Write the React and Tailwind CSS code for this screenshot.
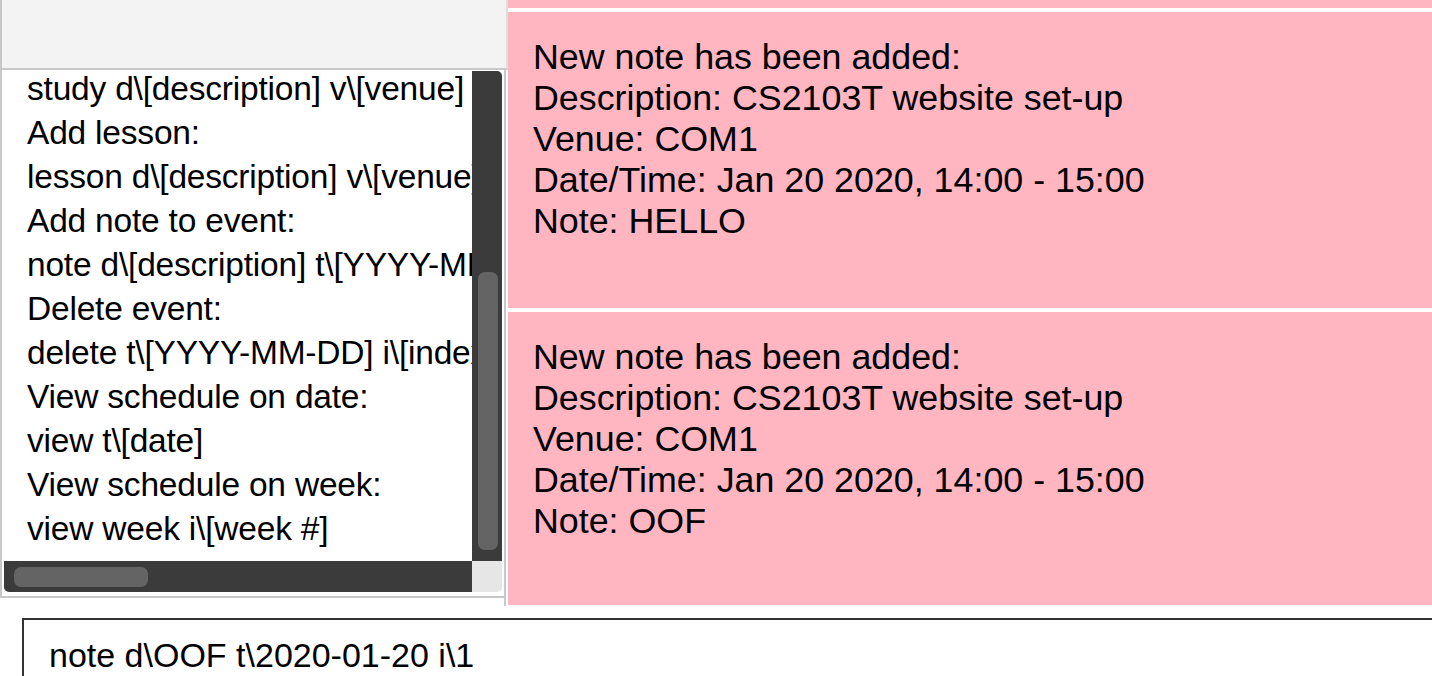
import React from "react";

const leftLines = [
  "study d\\[description] v\\[venue] t\\[YYYY-MM-DD HHMM-HHMM]",
  "Add lesson:",
  "lesson d\\[description] v\\[venue] t\\[YYYY-MM-DD HHMM-HHMM]",
  "Add note to event:",
  "note d\\[description] t\\[YYYY-MM-DD] i\\[index]",
  "Delete event:",
  "delete t\\[YYYY-MM-DD] i\\[index]",
  "View schedule on date:",
  "view t\\[date]",
  "View schedule on week:",
  "view week i\\[week #]",
];

function Card({ note }) {
  return (
    <div className="h-[296px] shrink-0 bg-[#ffb6c1] pl-[25px] pt-[25px] text-[35.8px] leading-[41px] text-black font-['Liberation_Sans',Arial,sans-serif]">
      <div>New note has been added:</div>
      <div>Description: CS2103T website set-up</div>
      <div>Venue: COM1</div>
      <div>Date/Time: Jan 20 2020, 14:00 - 15:00</div>
      <div>Note: {note}</div>
    </div>
  );
}

export default function App() {
  return (
    <div className="w-[1432px] h-[676px] overflow-hidden bg-white flex flex-col font-['Liberation_Sans',Arial,sans-serif]">
      <div className="flex h-[606px] shrink-0">
        {/* Left column */}
        <div className="w-[508px] shrink-0 flex flex-col">
          <div className="h-[70px] w-[508px] bg-[#f3f3f3] border-l-2 border-b-2 border-r-2 border-l-[#c8c8c8] border-b-[#c8c8c8] border-r-[#dedede]" />
          <div className="w-[506px] h-[528px] border-l-2 border-r-2 border-b-2 border-[#c8c8c8] bg-white pt-[1px] pl-[2px] pr-[2px] pb-[4px]">
            <div className="grid h-full w-full grid-cols-[1fr_30px] grid-rows-[1fr_31px]">
              <div className="overflow-hidden">
                <div className="-mt-[4px] pl-[23px] text-[33.5px] tracking-[-0.2px] leading-[44px] text-black">
                  {leftLines.map((l, i) => (
                    <div key={i} className="whitespace-nowrap">
                      {l}
                    </div>
                  ))}
                </div>
              </div>
              <div className="bg-[#3b3b3b] rounded-tr-[5px] pt-[201px] pb-[11px] pl-[6px] pr-[4px] flex">
                <div className="flex-1 bg-[#646464] rounded-[7px]" />
              </div>
              <div className="bg-[#3b3b3b] rounded-bl-[5px] pl-[10px] pt-[6px] pb-[5px] flex">
                <div className="w-[134px] bg-[#646464] rounded-[7px]" />
              </div>
              <div className="bg-[#e6e6e6] rounded-br-[5px]" />
            </div>
          </div>
          <div className="h-[8px] w-[506px] border-r-2 border-[#c8c8c8]" />
        </div>
        {/* Right column */}
        <div className="flex-1 h-[605px] overflow-hidden bg-white flex flex-col gap-[4px]">
          <div className="h-[8px] shrink-0 bg-[#ffb6c1]" />
          <Card note="HELLO" />
          <Card note="OOF" />
        </div>
      </div>
      <div className="mt-[12px] ml-[22px] flex-1 border-t-2 border-l-2 border-[#333333] pl-[25px] pt-[15px]">
        <div className="text-[34px] leading-[40px] text-black whitespace-nowrap">
          note d\OOF t\2020-01-20 i\1
        </div>
      </div>
    </div>
  );
}
